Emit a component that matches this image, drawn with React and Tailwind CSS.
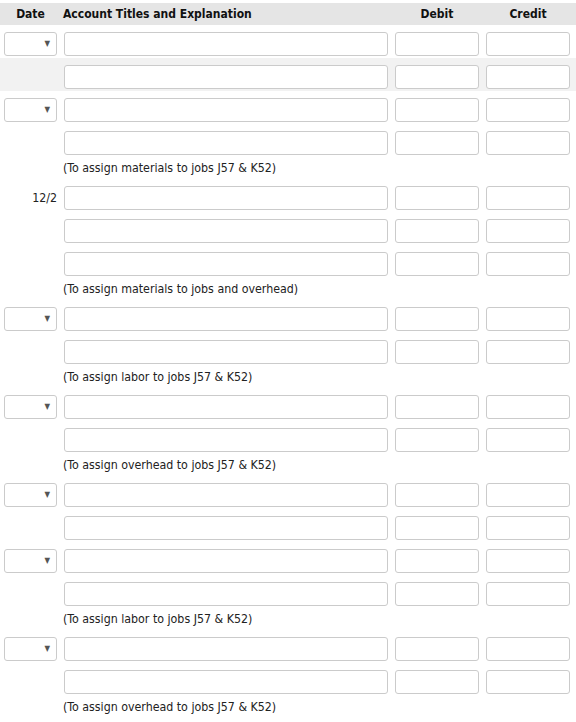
import React from "react";

const entries = [
  { date: "select", lines: 2, note: null, hoverSecond: true },
  { date: "select", lines: 2, note: "(To assign materials to jobs J57 & K52)" },
  { date: "12/2", lines: 3, note: "(To assign materials to jobs and overhead)" },
  { date: "select", lines: 2, note: "(To assign labor to jobs J57 & K52)" },
  { date: "select", lines: 2, note: "(To assign overhead to jobs J57 & K52)" },
  { date: "select", lines: 2, note: null },
  { date: "select", lines: 2, note: "(To assign labor to jobs J57 & K52)" },
  { date: "select", lines: 2, note: "(To assign overhead to jobs J57 & K52)" },
];

const inputCls =
  "h-[24px] w-full rounded-[3px] border border-[#cbcbcb] bg-white outline-none";

function DateSelect() {
  return (
    <div className="relative h-[24px] w-full rounded-[3px] border border-[#cbcbcb] bg-white">
      <span className="absolute right-[6px] top-[7px] text-[8px] leading-none text-[#555]">
        ▼
      </span>
    </div>
  );
}

function Line({ date, highlight }) {
  return (
    <div
      className={`grid h-[33px] grid-cols-[53px_324px_84px_84px] items-start gap-x-[7px] pl-[4px] pr-[6px] pt-[7px] ${
        highlight ? "bg-[#f2f2f2]" : ""
      }`}
    >
      <div className="flex h-[24px] items-center justify-end">
        {date === "select" ? (
          <DateSelect />
        ) : date ? (
          <span className="text-[12.3px] text-[#222]">{date}</span>
        ) : null}
      </div>
      <input className={inputCls} />
      <input className={inputCls} />
      <input className={inputCls} />
    </div>
  );
}

export default function App() {
  return (
    <div
      className="w-[576px] bg-white pt-[3px] text-[12px] text-[#222]"
      style={{ fontFamily: '"DejaVu Sans Condensed", "DejaVu Sans", sans-serif' }}
    >
      {/* header */}
      <div className="grid h-[22px] grid-cols-[53px_324px_84px_84px] items-center gap-x-[7px] bg-[#e5e5e5] pl-[4px] pr-[6px] font-bold text-[#111]">
        <div className="text-center">Date</div>
        <div className="-ml-[1px]">Account Titles and Explanation</div>
        <div className="text-center">Debit</div>
        <div className="text-center">Credit</div>
      </div>

      {entries.map((e, i) => (
        <div key={i}>
          {Array.from({ length: e.lines }).map((_, j) => (
            <Line
              key={j}
              date={j === 0 ? e.date : null}
              highlight={e.hoverSecond && j === 1}
            />
          ))}
          {e.note && (
            <div className="flex h-[22px] items-center pl-[63px] pt-[1px] text-[12.3px]">
              {e.note}
            </div>
          )}
        </div>
      ))}
    </div>
  );
}
